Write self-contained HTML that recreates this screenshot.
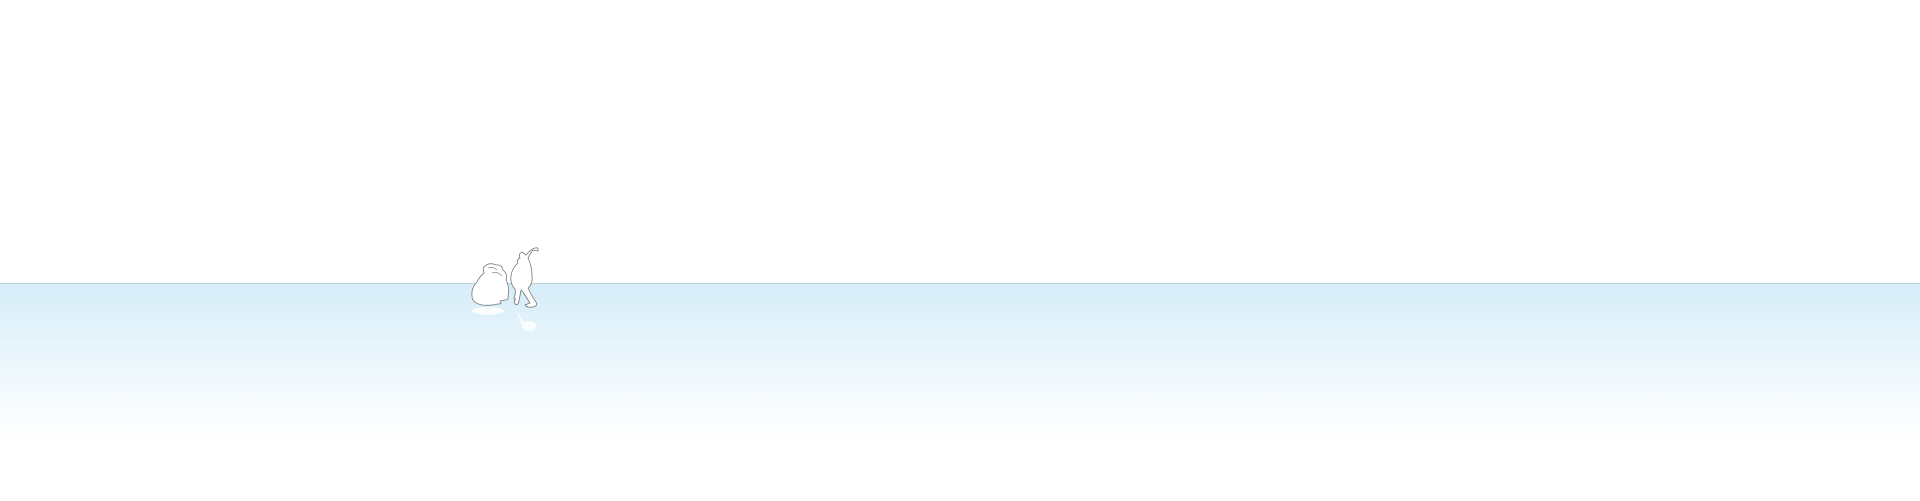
<!DOCTYPE html>
<html><head><style>
html,body{margin:0;padding:0;width:1920px;height:500px;overflow:hidden;background:#fff}
#sea{position:absolute;left:0;top:283px;width:1920px;height:217px;border-top:1px solid #bcd3dc;
background:linear-gradient(#d6edf8 0px,#e6f4fb 60px,#f4fafe 110px,#ffffff 155px,#fff 217px)}
svg{position:absolute;left:0;top:0}
</style></head><body>
<div id="sea"></div>
<svg width="1920" height="500" viewBox="0 0 1920 500">
<g fill="#fff" stroke="#777" stroke-width="0.8" stroke-linejoin="round">
<!-- sack -->
<path d="M485 266 Q490 262 496 265 Q502 264 503 270 Q508 274 506 280 Q510 288 508 296 Q509 300 505 300 L500 301 Q503 304 498 304 Q490 306 482 305 Q472 303 472 296 Q471 288 477 282 Q480 276 484 273 Q482 268 485 266Z"/>
<path d="M488 268 Q493 266 497 270 M492 273 Q498 271 502 276" fill="none" stroke="#999"/>
<!-- person -->
<path d="M520 258 Q518 254 522 252 L526 255 Q531 249 535 248 Q539 247 538 251 L533 250 Q530 254 528 258 Q532 266 532 276 Q533 284 528 288 L530 292 Q533 298 536 302 Q538 306 533 307 Q527 308 525 305 L530 303 Q526 297 523 292 L521 290 Q520 296 519 301 Q518 306 515 304 L514 298 Q516 293 515 289 Q510 284 511 276 Q512 268 518 263 Q516 260 520 258Z"/>
<path d="M516 298 L514 303" fill="none" stroke="#999"/>
</g>
<!-- reflection -->
<g fill="#fff" opacity="0.85">
<ellipse cx="488" cy="311" rx="16" ry="4"/>
<ellipse cx="529" cy="326" rx="7" ry="5"/>
<path d="M517 311 L524 322 L521 324 Z"/>
</g>
</svg>
</body></html>
